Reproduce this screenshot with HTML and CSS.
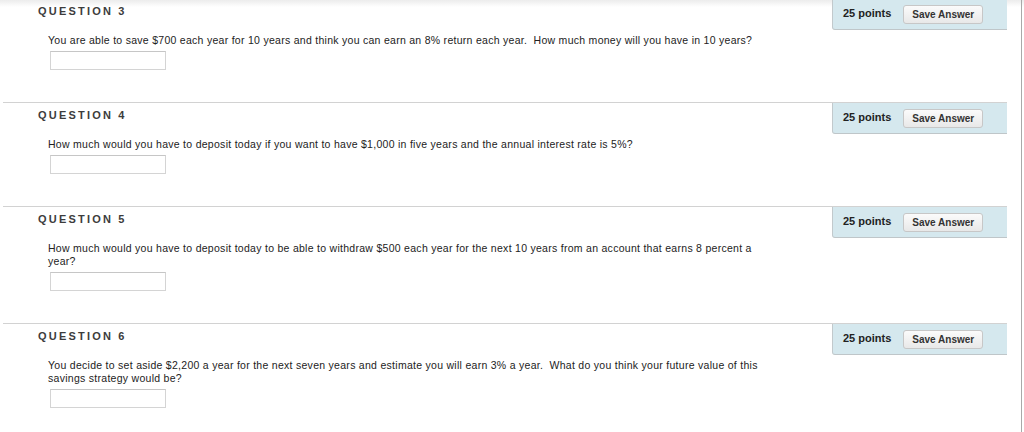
FILE: index.html
```html
<!DOCTYPE html>
<html>
<head>
<meta charset="utf-8">
<link rel="stylesheet" href="styles.css">
</head>
<body>
<div class="page">
  <div class="question first">
    <div class="q-body">
      <div class="q-title">QUESTION 3</div>
      <div class="q-text">You are able to save $700 each year for 10 years and think you can earn an 8% return each year.&nbsp; How much money will you have in 10 years?</div>
      <div class="answer"></div>
    </div>
    <div class="q-panel"><span class="points">25 points</span><span class="save-btn">Save Answer</span></div>
  </div>
  <div class="question">
    <div class="q-body">
      <div class="q-title">QUESTION 4</div>
      <div class="q-text">How much would you have to deposit today if you want to have $1,000 in five years and the annual interest rate is 5%?</div>
      <div class="answer"></div>
    </div>
    <div class="q-panel"><span class="points">25 points</span><span class="save-btn">Save Answer</span></div>
  </div>
  <div class="question">
    <div class="q-body">
      <div class="q-title">QUESTION 5</div>
      <div class="q-text">How much would you have to deposit today to be able to withdraw $500 each year for the next 10 years from an account that earns 8 percent a year?</div>
      <div class="answer"></div>
    </div>
    <div class="q-panel"><span class="points">25 points</span><span class="save-btn">Save Answer</span></div>
  </div>
  <div class="question">
    <div class="q-body">
      <div class="q-title">QUESTION 6</div>
      <div class="q-text">You decide to set aside $2,200 a year for the next seven years and estimate you will earn 3% a year.&nbsp; What do you think your future value of this savings strategy would be?</div>
      <div class="answer"></div>
    </div>
    <div class="q-panel"><span class="points">25 points</span><span class="save-btn">Save Answer</span></div>
  </div>
</div>
</body>
</html>
```

FILE: styles.css
```css
html, body {
  margin: 0;
  padding: 0;
  height: 100%;
  overflow: hidden;
}
body {
  background: linear-gradient(#ececec, #ffffff 7px) no-repeat;
  font-family: "Liberation Sans", Arial, Helvetica, sans-serif;
  color: #222;
}
.page {
  width: 1022px;
  height: 434px;
  margin-top: -2px;
  border-right: 1px solid #a9a9a9;
  box-sizing: border-box;
  padding-left: 3px;
}
.question {
  width: 1004px;
  display: flex;
  border-top: 1px solid #d2d2d2;
}
.question.first {
  border-top-color: transparent;
}
.q-body {
  flex: 1;
  padding: 5px 0 32px 35px;
}
.q-title {
  font-size: 11px;
  line-height: 14px;
  font-weight: bold;
  letter-spacing: 2.2px;
  color: #3c3c3c;
}
.q-text {
  margin: 16px 0 0 10px;
  width: 715px;
  font-size: 10.5px;
  letter-spacing: 0.28px;
  line-height: 13px;
  color: #222;
}
.answer {
  margin: 4px 0 0 12px;
  width: 114px;
  height: 17px;
  border: 1px solid #d4d4d4;
  border-top-color: #c6c6c6;
  background: #fff;
}
.q-panel {
  width: 164px;
  height: 30px;
  padding-left: 10px;
  background: #d5e8ee;
  border-left: 1px solid #c2c9cc;
  border-bottom: 1px solid #bfc6c9;
  border-bottom-left-radius: 3px;
  display: flex;
  align-items: center;
  gap: 12px;
}
.points {
  font-size: 11px;
  font-weight: bold;
  color: #222;
  padding-bottom: 3px;
}
.save-btn {
  font-size: 10px;
  font-weight: bold;
  color: #333;
  height: 17px;
  line-height: 17px;
  padding: 0 8px;
  border: 1px solid #c7c7c7;
  border-radius: 3px;
  background: linear-gradient(#fbfbfb, #e8e8e8);
}
```
